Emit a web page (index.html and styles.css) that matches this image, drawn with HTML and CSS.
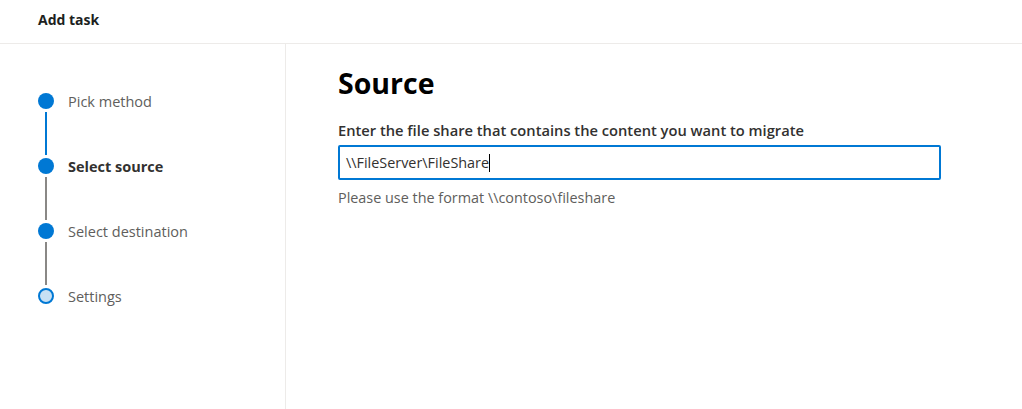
FILE: index.html
```html
<!DOCTYPE html>
<html>
<head>
<meta charset="utf-8">
<link rel="stylesheet" href="styles.css">
</head>
<body>
<header class="topbar"><h1 class="title">Add task</h1></header>
<div class="main">
  <nav class="steps">
    <div class="step done">
      <div class="track"><span class="dot"></span><span class="line line-blue"></span></div>
      <span class="label">Pick method</span>
    </div>
    <div class="step current">
      <div class="track"><span class="dot"></span><span class="line"></span></div>
      <span class="label">Select source</span>
    </div>
    <div class="step">
      <div class="track"><span class="dot"></span><span class="line"></span></div>
      <span class="label">Select destination</span>
    </div>
    <div class="step last">
      <div class="track"><span class="dot dot-open"></span></div>
      <span class="label">Settings</span>
    </div>
  </nav>
  <section class="content">
    <h2 class="heading">Source</h2>
    <label class="field-label" for="share">Enter the file share that contains the content you want to migrate</label>
    <div class="input"><span class="value">\\FileServer\FileShare</span><span class="caret"></span></div>
    <p class="hint">Please use the format \\contoso\fileshare</p>
  </section>
</div>
</body>
</html>
```
FILE: styles.css
```css
* { box-sizing: border-box; }
html, body { margin: 0; padding: 0; background: #fff; }
body {
  font-family: "Open Sans", "Noto Sans", "Liberation Sans", sans-serif;
  color: #323130;
  width: 1022px;
  height: 409px;
  overflow: hidden;
}
.topbar {
  height: 44px;
  border-bottom: 1px solid #edebe9;
  display: flex;
  align-items: center;
  padding-left: 38px;
}
.title {
  margin: 0;
  font-size: 14px;
  font-weight: 700;
  color: #201f1e;
  position: relative;
  top: -2px;
}
.main {
  display: flex;
  height: 365px;
}
.steps {
  width: 286px;
  border-right: 1px solid #edebe9;
  padding-top: 49px;
  padding-left: 38px;
}
.step {
  display: flex;
  height: 65px;
}
.track {
  width: 16px;
  display: flex;
  flex-direction: column;
  align-items: center;
  margin-right: 14px;
}
.dot {
  width: 16px;
  height: 16px;
  border-radius: 50%;
  background: #0078d4;
  flex: none;
}
.dot-open {
  background: #c7e0f4;
  border: 2px solid #0078d4;
}
.line {
  width: 2px;
  flex: 1;
  background: #8a8886;
  margin: 3px 0;
}
.line-blue { background: #0078d4; }
.label {
  font-size: 14.5px;
  line-height: 17px;
  color: #605e5c;
}
.current .label {
  font-weight: 700;
  color: #323130;
}
.content {
  padding-left: 52px;
  padding-top: 20px;
}
.heading {
  margin: 0;
  font-size: 28.5px;
  font-weight: 700;
  color: #000;
  line-height: 38px;
}
.field-label {
  display: block;
  margin-top: 18px;
  font-size: 14.7px;
  font-weight: 600;
  color: #323130;
  line-height: 20px;
}
.input {
  margin-top: 5px;
  width: 603px;
  height: 35px;
  border: 2px solid #0078d4;
  border-radius: 2px;
  display: flex;
  align-items: center;
  padding-left: 6px;
  font-size: 14.4px;
  color: #323130;
}
.caret {
  width: 1px;
  height: 18px;
  background: #000;
}
.hint {
  margin: 8px 0 0;
  font-size: 14.4px;
  color: #605e5c;
  line-height: 20px;
}
```
